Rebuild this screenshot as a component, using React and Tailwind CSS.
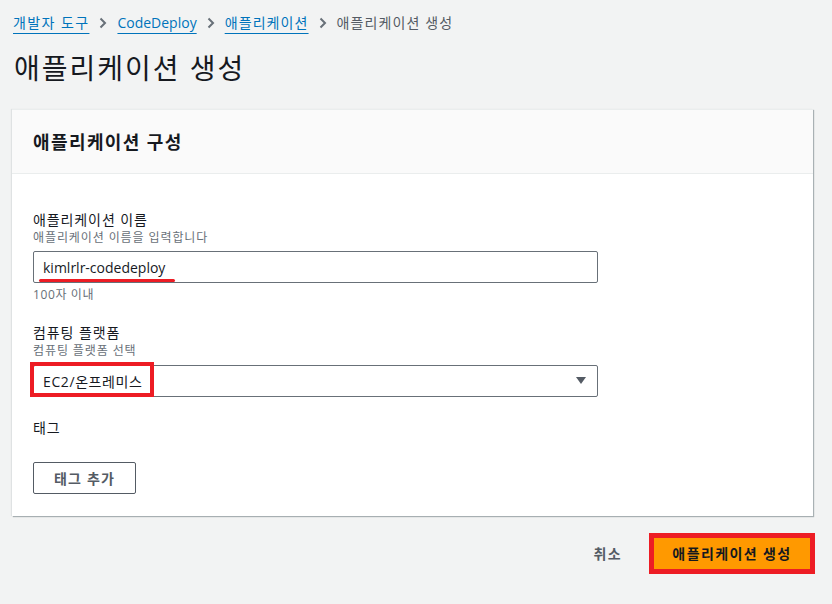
import React from 'react';

const font = "font-['Open_Sans','Noto_Sans_CJK_KR',sans-serif]";

const Chevron = () => (
  <svg width="8" height="14" viewBox="0 0 8 14" className="mx-[10px] shrink-0">
    <path d="M1.5 2.5 L6 7 L1.5 11.5" fill="none" stroke="#687078" strokeWidth="2" />
  </svg>
);

const Field = ({ label, desc, children }) => (
  <div>
    <div className="text-[14px] leading-[20px] tracking-[0.9px] text-[#16191f]">{label}</div>
    {desc && <div className="text-[12px] leading-[16px] tracking-[0.9px] text-[#687078]">{desc}</div>}
    {children}
  </div>
);

export default function App() {
  return (
    <div className={`${font} min-h-[604px] w-[832px] bg-[#f2f3f3] pt-[12px] pl-[12px] pr-[19px]`}>
      {/* breadcrumb */}
      <nav className="flex items-center h-[20px] mt-[1px] pl-[1px] text-[14px] leading-[20px]">
        <a className="text-[#0073bb] underline underline-offset-[5px] decoration-1 tracking-[1.4px]">개발자 도구</a>
        <Chevron />
        <a className="text-[#0073bb] underline underline-offset-[5px] decoration-1">CodeDeploy</a>
        <Chevron />
        <a className="text-[#0073bb] underline underline-offset-[5px] decoration-1 tracking-[1.1px]">애플리케이션</a>
        <Chevron />
        <span className="text-[#545b64] tracking-[1.1px]">애플리케이션 생성</span>
      </nav>

      <h1 className="mt-[17px] pl-[2px] text-[28px] leading-[36px] font-normal tracking-[2px] text-[#16191f]">애플리케이션 생성</h1>

      {/* card */}
      <div className="mt-[23px] bg-white border-t border-[#eaeded] shadow-[1px_1px_1px_0_rgba(0,28,36,0.3),-1px_0_1px_0_rgba(0,28,36,0.08)]">
        <div className="h-[64px] flex items-center px-[21px] bg-[#fafafa] border-b border-[#eaeded]">
          <h2 className="text-[18px] leading-[22px] font-bold tracking-[1.4px] text-[#16191f]">애플리케이션 구성</h2>
        </div>
        <div className="pt-[36px] pb-[22px] px-[21px]">
          <Field label="애플리케이션 이름" desc="애플리케이션 이름을 입력합니다">
            <div className="relative mt-[5px] w-[565px] h-[32px] border border-[#687078] rounded-[2px] flex items-center pl-[9px] text-[14px] text-[#16191f]">
              kimlrlr-codedeploy
              <div className="absolute left-[5px] top-[27px] w-[136px] h-[3px] rounded-full bg-[#ed1c24]" />
            </div>
            <div className="mt-[4px] text-[12px] leading-[16px] tracking-[0.6px] text-[#687078]">100자 이내</div>
          </Field>

          <div className="mt-[20px]">
            <Field label="컴퓨팅 플랫폼" desc="컴퓨팅 플랫폼 선택">
              <div className="relative mt-[6px] w-[565px] h-[32px] border border-[#687078] rounded-[2px] flex items-center justify-between pl-[9px] pr-[11px] text-[14px] text-[#16191f]">
                <span className="tracking-[0.6px]">EC2/온프레미스</span>
                <svg width="10" height="8" viewBox="0 0 10 8">
                  <path d="M0 0 H10 L5 7 Z" fill="#545b64" />
                </svg>
                <div className="absolute left-[-4px] top-[-4px] w-[124px] h-[35px] border-[4px] border-[#ed1c24]" />
              </div>
            </Field>
          </div>

          <div className="mt-[21px]">
            <Field label="태그" />
            <button className="mt-[24px] h-[32px] w-[103px] border border-[#545b64] rounded-[2px] bg-white text-[14px] font-bold tracking-[1.2px] text-[#545b64]">
              태그 추가
            </button>
          </div>
        </div>
      </div>

      {/* actions */}
      <div className="mt-[22px] flex items-center justify-end pr-[3px]">
        <button className="px-[20px] h-[31px] text-[14px] font-bold tracking-[1.4px] text-[#545b64]">취소</button>
        <div className="relative ml-[12px]">
          <button className="h-[31px] w-[156px] bg-[#ff9900] text-[14px] font-bold tracking-[1.4px] text-[#16191f]">애플리케이션 생성</button>
          <div className="absolute -inset-[5px] border-[5px] border-[#ed1c24] pointer-events-none" />
        </div>
      </div>
    </div>
  );
}
